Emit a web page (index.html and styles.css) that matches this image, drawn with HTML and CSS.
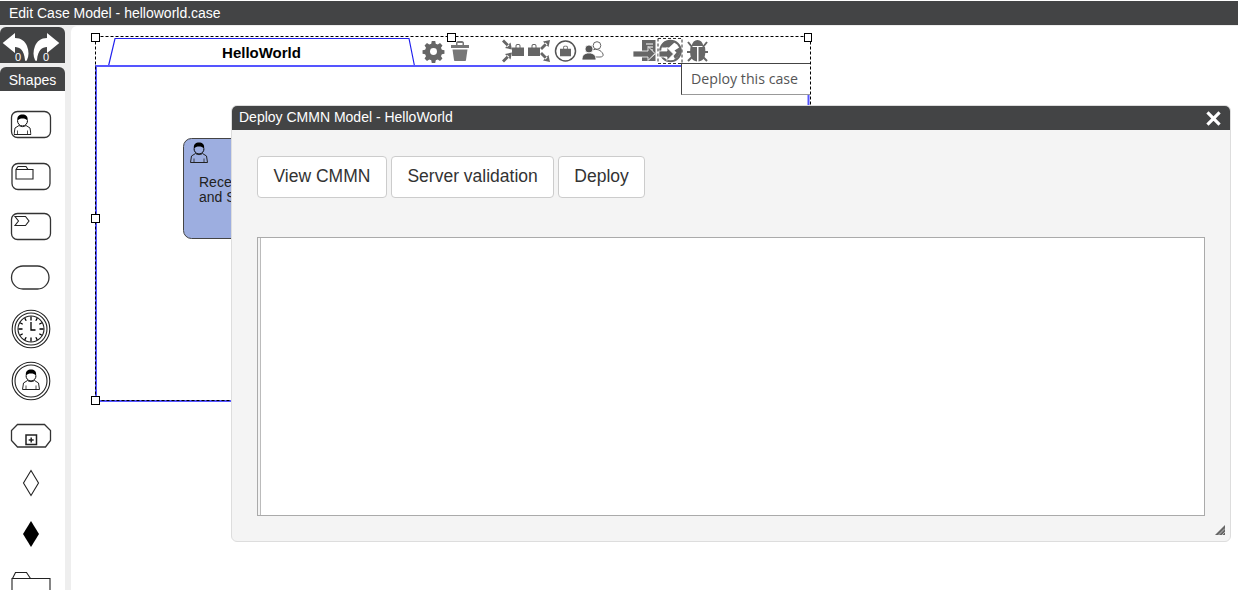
FILE: index.html
```html
<!DOCTYPE html>
<html lang="en">
<head>
<meta charset="utf-8">
<title>Edit Case Model - helloworld.case</title>
<link rel="stylesheet" href="styles.css">
</head>
<body>
<svg class="defs" width="0" height="0" aria-hidden="true">
  <defs>
    <symbol id="person" viewBox="0 0 18 21" preserveAspectRatio="none">
      <path d="M4 6.500c0 3 2 5.500 5 5.500s5-2.500 5-5.500" fill="currentColor" stroke="#000"/>
      <path d="M4 7C3 2 6 .5 9 .5s6 1.500 5 6.500c-1-2-3-2.500-5-2.500s-4 .5-5 2.500Z" fill="#000"/>
      <path d="M5.500 11.500 1.500 14 .5 20.500h17l-1-6.500-4-2.500c-2 1.500-5 1.500-7 0Z" fill="currentColor" stroke="#222"/>
      <path d="M4 20.500v-4M14 20.500v-4" stroke="#222" stroke-width=".8" fill="none"/>
    </symbol>
    <symbol id="bag" viewBox="0 0 12 12">
      <path d="M0 3.500h12V12H0ZM3.500 3.500V2C3.500.5 4.500 0 6 0s2.500.5 2.500 2v1.500" fill="#666"/>
      <path d="M4.500 3.500V2c0-.6.500-1 1.500-1s1.500.4 1.500 1v1.500Z" fill="#fff"/>
    </symbol>
    <g id="arr">
      <path d="M0 0-7-1.500-1.500-7ZM-4.500-2.500-2.500-4.500-8-10-10-8Z" fill="#666"/>
    </g>
  </defs>
</svg>

<header class="titlebar">Edit Case Model - helloworld.case</header>

<div class="app">
  <aside class="sidebar">
    <div class="history">
      <div class="history-btn">
        <svg class="history-icon" viewBox="0 0 28 30"><path d="M13 1 .7 11 13 21v-6c5 0 9 3 10 13 .3 1.500 1.500 1 2 0 2-4 2-9 0-14-2-5-6-8-12-8Z" fill="#fff"/></svg>
        <span class="count">0</span>
      </div>
      <div class="history-btn history-redo">
        <svg class="history-icon" viewBox="0 0 28 30"><path d="M15 1 27.300 11 15 21v-6c-5 0-9 3-10 13-.3 1.500-1.500 1-2 0-2-4-2-9 0-14 2-5 6-8 12-8Z" fill="#fff"/></svg>
        <span class="count">0</span>
      </div>
    </div>
    <div class="shapes-title">Shapes</div>
    <div class="shapes">
      <svg class="shape" viewBox="0 0 62 52">
        <rect x="11.500" y="13.500" width="39" height="26" rx="6" class="outline"/>
        <use href="#person" class="person-light" x="13.500" y="16" width="18" height="21"/>
      </svg>
      <svg class="shape" viewBox="0 0 62 52">
        <rect x="12" y="13.500" width="38" height="26" rx="6" class="outline"/>
        <path d="M16 19.500h17v9.500H16Zm0 0 2-3h8l2 3" class="thin"/>
      </svg>
      <svg class="shape" viewBox="0 0 62 52">
        <rect x="11.500" y="11.500" width="39" height="26" rx="6" class="outline"/>
        <path d="M15 14.500h10.500l3.500 4.500-3.500 4.500H15l3.500-4.500Z" class="thin"/>
      </svg>
      <svg class="shape" viewBox="0 0 62 52">
        <rect x="11.500" y="12" width="37.500" height="23" rx="11.500" class="outline"/>
      </svg>
      <svg class="shape" viewBox="0 0 62 52">
        <circle cx="31" cy="23" r="18.800" class="thin"/>
        <circle cx="31" cy="23" r="16" class="thin"/>
        <circle cx="31" cy="23" r="13" class="thin"/>
        <path d="M31 10.500v4M31 31.500v4M18.500 23h4M39.500 23h4M24.700 12.100l1.500 2.600M37.300 12.100l-1.500 2.600M24.700 33.900l1.500-2.600M37.300 33.900l-1.500-2.600M20.100 16.700l2.600 1.500M41.900 16.700l-2.600 1.500M20.100 29.300l2.600-1.500M41.900 29.300l-2.600-1.500" class="ticks"/>
        <path d="M31 16v8h4.500" class="ticks"/>
      </svg>
      <svg class="shape" viewBox="0 0 62 52">
        <circle cx="31" cy="23" r="18.800" class="thin"/>
        <circle cx="31" cy="23" r="16" class="thin"/>
        <use href="#person" class="person-light" x="22" y="11" width="18" height="21"/>
      </svg>
      <svg class="shape" viewBox="0 0 62 52">
        <path d="M17.500 14.500h27l6 6v10l-5 6.500h-28l-6-6.500v-10Z" class="outline"/>
        <path d="M26 25h10.500v9.500H26Z" class="bold"/>
        <path d="M31.200 27.500v5M28.700 30h5" class="bold"/>
      </svg>
      <svg class="shape" viewBox="0 0 62 52">
        <path d="M31 8.500 38.500 21 31 33.500 23.500 21Z" class="thin"/>
      </svg>
      <svg class="shape" viewBox="0 0 62 52">
        <path d="M31 7 39 20 31 33 23 20Z"/>
      </svg>
      <svg class="shape" viewBox="0 0 62 52">
        <path d="M12 12.500h38V40H12ZM12.500 12.500l3-6h11l4 6" class="thin"/>
      </svg>
    </div>
  </aside>

  <main class="canvas">
    <svg class="diagram" width="1167" height="565" viewBox="71 25 1167 565">
      <path d="M108.500 66 115 38.500h294L414.500 66" class="case-tab"/>
      <rect x="96" y="66" width="712.500" height="335" class="case-box"/>
      <rect x="95.500" y="36.500" width="715" height="364" class="selection"/>

      <rect x="183.500" y="138.500" width="120" height="100" rx="8" class="task"/>
      <use href="#person" class="person-task" x="190" y="142" width="18" height="21"/>

      <rect x="91.500" y="33.500" width="8" height="8" class="handle"/>
      <rect x="447.500" y="33.500" width="8" height="8" class="handle"/>
      <rect x="804.500" y="33.500" width="7" height="8" class="handle"/>
      <rect x="91.500" y="214.500" width="8" height="8" class="handle"/>
      <rect x="91.500" y="396.500" width="8" height="8" class="handle"/>

      <!-- gear -->
      <g transform="translate(433.500 51.500) scale(.87)">
        <path d="M-2-12h4l.6 3 2.300 1 2.600-1.700 2.800 2.800-1.700 2.600 1 2.300 3 .6v4l-3 .6-1 2.300 1.700 2.600-2.800 2.800-2.600-1.700-2.300 1-.6 3h-4l-.6-3-2.300-1-2.600 1.700-2.800-2.800 1.700-2.600-1-2.300-3-.6v-4l3-.6 1-2.300-1.700-2.600 2.800-2.800 2.600 1.700 2.300-1Z" fill="#666"/>
        <circle r="4" fill="#fff"/>
      </g>
      <!-- trash -->
      <path d="M451 45h18v3h-18ZM456 45v-2c0-1 1-2 2-2h4c1 0 2 1 2 2v2h-1.500v-2h-5v2ZM452.500 49.500h15L466 60c0 .5-.5 1-1 1h-10c-.5 0-1-.5-1-1Z" fill="#777"/>
      <!-- bag with arrows in -->
      <use href="#arr" transform="translate(512 49.500)"/>
      <use href="#arr" transform="translate(512 52.500) scale(1 -1)"/>
      <use href="#bag" x="512" y="44" width="12" height="12"/>
      <!-- bag with arrows out -->
      <use href="#bag" x="528" y="44" width="12" height="12"/>
      <use href="#arr" transform="translate(550 40) scale(1 -1)"/>
      <use href="#arr" transform="translate(550 62)"/>
      <!-- circled bag -->
      <circle cx="565.500" cy="51" r="10" fill="none" stroke="#555" stroke-width="1.500"/>
      <use href="#bag" x="560" y="45.500" width="11" height="11"/>
      <!-- team -->
      <circle cx="597" cy="45.500" r="3.800" fill="#fff" stroke="#666"/>
      <path d="M592 50c5-1.500 9 0 11 4 .8 2-1 3-3 3h-6" fill="#fff" stroke="#666"/>
      <circle cx="589" cy="49" r="4" fill="#555" stroke="#fff" stroke-width=".8"/>
      <path d="M582 60c0-5 2.500-7 7-7s7 2 7 7Z" fill="#555" stroke="#fff" stroke-width=".8"/>
      <!-- import -->
      <path d="M642 40h13.500v21H642v-4.500h6.500V60l7-6-7-6.500v3.500H642Z" fill="#666"/>
      <path d="M646 44h7M648 47h5M650 50h3" stroke="#fff" stroke-width="1"/>
      <path d="M633 51h15v-4.500l7 7-7 7V57h-15Z" fill="#666" stroke="#fff" stroke-width=".8"/>
      <!-- deploy -->
      <rect x="658" y="38.500" width="24" height="25" class="focus"/>
      <circle cx="670.500" cy="51" r="10.300" fill="none" stroke="#666" stroke-width="2"/>
      <path d="M663 43c3-3 9-3 12-1l-6 5.500h-7ZM680 47c1.500 5-1 10-5 12l-1.500-3 3-3.500-2-2Z" fill="#666"/>
      <path d="M659 51h8v-3.500l6.500 6.500-6.500 6.500V57h-8Z" fill="#666" stroke="#fff" stroke-width=".8"/>
      <!-- bug -->
      <path d="M691.500 46c1-4 3-6 6-6s5 2 6 6Zm-1 1h6.500v14.500c-2.500-.3-5-1.500-6-4.500-1-2-1-7-.5-10Zm8 0h6.500c.5 3 .5 8-.5 10-1 3-3.500 4.200-6 4.500Z" fill="#666"/>
      <path d="M688 42l4 5M707 42l-4 5M687 52h5M708 52h-5M688 61l4-4M707 61l-4-4" stroke="#666" stroke-width="2" fill="none"/>
    </svg>

    <p class="task-label">Rece<br>and S</p>
    <p class="case-name">HelloWorld</p>
    <div class="tooltip">Deploy this case</div>
  </main>
</div>

<section class="dialog">
  <header class="dialog-header">
    <span class="dialog-title">Deploy CMMN Model - HelloWorld</span>
    <svg class="dialog-close" viewBox="0 0 14 14"><path d="M2 2l10 10M12 2 2 12"/></svg>
  </header>
  <div class="dialog-body">
    <div class="actions">
      <button class="btn" type="button">View CMMN</button>
      <button class="btn" type="button">Server validation</button>
      <button class="btn" type="button">Deploy</button>
    </div>
    <div class="output"><div class="output-inner"></div></div>
  </div>
  <svg class="resizer" viewBox="0 0 10 10"><path class="resizer-fill" d="M10 0v10H0Z"/><path class="resizer-lines" d="M10 3.500 3.500 10M10 7 7 10"/></svg>
</section>
</body>
</html>
```
FILE: styles.css
```css
* { box-sizing: border-box; }
html, body { height: 590px; }
body {
  margin: 0;
  overflow: hidden;
  background: #fff;
  font-family: "Liberation Sans", Arial, sans-serif;
  position: relative;
}
.defs { position: absolute; }

.titlebar {
  margin-top: 1px;
  height: 24px;
  padding-left: 9px;
  background: #434445;
  color: #fff;
  font-size: 14px;
  line-height: 25px;
}

.app {
  display: flex;
  height: 565px;
  background: #eee;
}

.sidebar {
  width: 65px;
  flex: none;
  padding-top: 2px;
  display: flex;
  flex-direction: column;
}
.history {
  height: 36px;
  display: flex;
  background: #434445;
  border-radius: 6px 6px 0 0;
  padding-left: 2px;
}
.history-btn { position: relative; width: 28px; height: 36px; }
.history-redo { margin-left: 2px; }
.history-icon { display: block; width: 28px; height: 30px; margin-top: 5px; }
.count {
  position: absolute;
  left: 13px;
  top: 25px;
  color: #fff;
  font-size: 11px;
  line-height: 11px;
}
.history-redo .count { left: 11px; }
.shapes-title {
  margin-top: 4px;
  height: 24px;
  background: #434445;
  border-radius: 6px 6px 0 0;
  color: #fff;
  font-size: 14px;
  line-height: 26px;
  text-align: center;
}
.shapes {
  flex: 1;
  background: #fff;
  padding-top: 7px;
  overflow: hidden;
}
.shape { display: block; width: 62px; height: 52px; }
.outline { fill: #fff; stroke: #333; stroke-width: 1.300; }
.thin { fill: #fff; stroke: #222; stroke-width: 1.100; }
.bold { fill: #fff; stroke: #222; stroke-width: 1.500; }
.ticks { fill: none; stroke: #000; stroke-width: 1.300; }
.person-light { color: #fff; }
.person-task { color: #9daee0; }

.canvas {
  position: relative;
  flex: 1;
  margin: 1px 0 0 6px;
  background: #fff;
  border-radius: 6px 0 0 0;
  overflow: hidden;
}
.diagram { position: absolute; left: 0; top: -1px; }
.case-box { fill: #fff; stroke: #5555ff; stroke-width: 2; }
.case-tab { fill: #fff; stroke: #2222ee; stroke-width: 1.200; }
.selection { fill: none; stroke: #000; stroke-width: 1; stroke-dasharray: 3 2; }
.handle { fill: #fff; stroke: #000; stroke-width: 1; }
.task { fill: #9daee0; stroke: #444; stroke-width: 1; }
.focus { fill: none; stroke: #333; stroke-width: 1; stroke-dasharray: 3 2; }

.task-label {
  position: absolute;
  left: 128px;
  top: 149px;
  margin: 0;
  font-size: 14px;
  line-height: 15px;
  color: #222;
  white-space: nowrap;
}
.case-name {
  position: absolute;
  left: 37px;
  top: 18px;
  width: 307px;
  margin: 0;
  font-size: 15px;
  font-weight: bold;
  line-height: 18px;
  text-align: center;
  color: #000;
}
.tooltip {
  position: absolute;
  left: 610px;
  top: 37px;
  width: 129px;
  height: 32px;
  padding-left: 9px;
  background: #fff;
  border-top: 1px solid #444;
  border-left: 1px solid #444;
  border-bottom: 1px solid #999;
  color: #555;
  font-family: "Open Sans", sans-serif;
  font-size: 14.200px;
  line-height: 29px;
}

.dialog {
  position: absolute;
  left: 231px;
  top: 105px;
  width: 1000px;
  height: 437px;
  display: flex;
  flex-direction: column;
  background: #f4f4f4;
  border: 1px solid #ddd;
  border-radius: 6px;
}
.dialog-header {
  flex: none;
  height: 24px;
  display: flex;
  align-items: center;
  justify-content: space-between;
  padding: 0 8px 0 7px;
  background: #434445;
  border-radius: 5px 5px 0 0;
  color: #fff;
  font-size: 14px;
}
.dialog-title { line-height: 22px; padding-bottom: 2px; }
.dialog-close { width: 17px; height: 17px; fill: none; stroke: #fff; stroke-width: 2.600; }
.dialog-body {
  flex: 1;
  padding: 26px 25px 25px;
  display: flex;
  flex-direction: column;
}
.actions { display: flex; gap: 4px; }
.btn {
  height: 42px;
  padding: 0 15.500px 2px;
  background: #fff;
  border: 1px solid #ccc;
  border-radius: 4px;
  color: #333;
  font-family: inherit;
  font-size: 17.500px;
}
.btn:last-child { padding: 0 15px 2px; }
.output {
  margin-top: 39px;
  height: 279px;
  border: 1px solid #aaa;
  padding-left: 2px;
  background: #f4f4f4;
}
.output-inner {
  height: 100%;
  background: #fff;
  border-left: 1px solid #bbb;
}
.resizer {
  position: absolute;
  right: 5px;
  bottom: 6px;
  width: 10px;
  height: 10px;
}
.resizer-fill { fill: #666; }
.resizer-lines { fill: none; stroke: #f4f4f4; stroke-width: .6; }
```
